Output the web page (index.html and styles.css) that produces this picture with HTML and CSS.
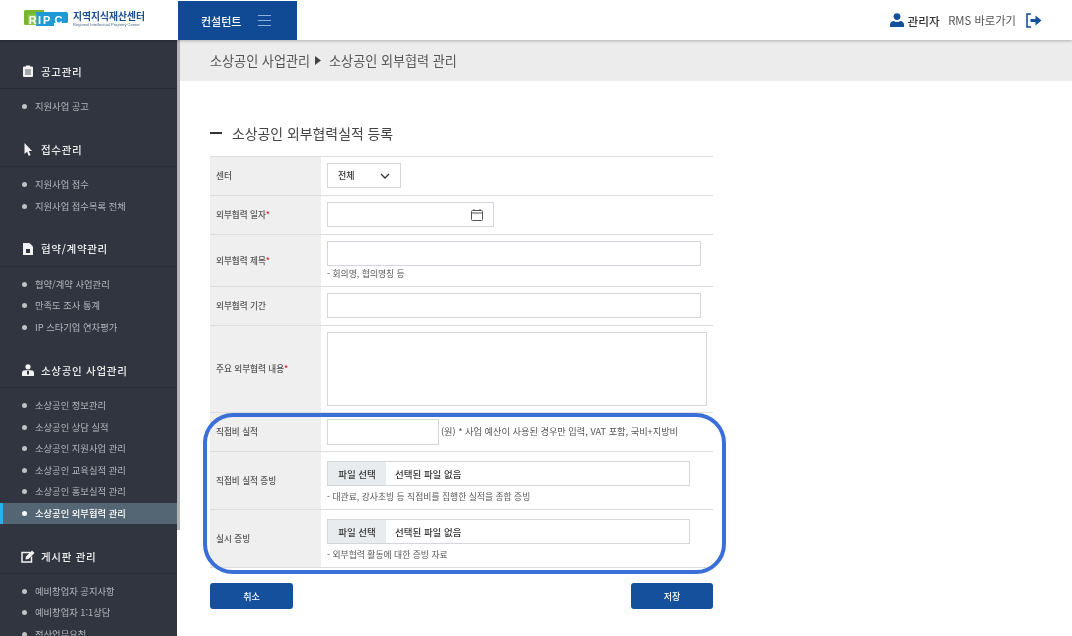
FILE: index.html
```html
<!DOCTYPE html>
<html lang="ko">
<head>
<meta charset="utf-8">
<title>소상공인 외부협력 관리</title>
<link rel="stylesheet" href="styles.css">
</head>
<body>
<header class="topbar">
  <div class="logo">
    <svg class="logo-mark" width="44" height="16" viewBox="0 0 44 16">
      <path d="M1.500 0H20V15H1.500A1.500 1.500 0 0 1 0 13.500V1.500A1.500 1.500 0 0 1 1.500 0z" fill="#78b82e"/>
      <path d="M12 2h30.500A1.500 1.500 0 0 1 44 3.500V11.500A1.500 1.500 0 0 1 42.500 13H30v3H12z" fill="#1f9ad6"/>
      <rect x="4" y="4.500" width="8.500" height="10.500" fill="#8fc64f"/>
      <text class="logo-letters" y="14" x="4.800 14 19 30.500">RIPC</text>
    </svg>
    <div class="logo-text">
      <div class="logo-ko">지역지식재산센터</div>
      <div class="logo-en">Regional Intellectual Property Center</div>
    </div>
  </div>
  <div class="top-menu">
    <span>컨설턴트</span>
    <svg width="13" height="11" viewBox="0 0 13 11"><path d="M0 .5h13M0 5.500h13M0 10.500h13" stroke="#8fb0d8" stroke-width="1"/></svg>
  </div>
  <div class="top-user">
    <svg width="14" height="14" viewBox="0 0 14 14"><circle cx="7" cy="3.600" r="3.400" fill="#15509c"/><path d="M0 14v-2.500c0-2.300 2-3.500 3.800-3.500 1 .7 2 1 3.200 1s2.200-.3 3.200-1c1.800 0 3.800 1.200 3.800 3.500V14z" fill="#15509c"/></svg>
    <span class="admin">관리자</span>
    <span class="rms">RMS 바로가기</span>
    <svg width="16" height="15" viewBox="0 0 16 15"><path d="M5 1H1v13h4" fill="none" stroke="#15509c" stroke-width="1.600"/><path d="M4.500 6h5V2.500L15.500 7.500 9.500 12.500V9h-5z" fill="#15509c"/></svg>
  </div>
</header>

<div class="layout">
  <aside class="sidebar">
    <section class="group">
      <h2 class="group-title">
        <svg class="gi" width="10" height="12" viewBox="0 0 10 12"><path d="M1 1.500h2V.5h4v1h2a1 1 0 0 1 1 1V11a1 1 0 0 1-1 1H1a1 1 0 0 1-1-1V2.500a1 1 0 0 1 1-1z" fill="#f2f2f2"/><path d="M2 5h6M2 7h6M2 9h6" stroke="#31353f" stroke-width=".8"/></svg>
        공고관리
      </h2>
      <ul class="items"><li>지원사업 공고</li></ul>
    </section>
    <section class="group">
      <h2 class="group-title">
        <svg class="gi" width="10" height="13" viewBox="0 0 10 13"><path d="M1.500 0v11l2.500-2.300L5.800 13 7.500 12 5.800 8H9z" fill="#f2f2f2"/></svg>
        접수관리
      </h2>
      <ul class="items"><li>지원사업 접수</li><li>지원사업 접수목록 전체</li></ul>
    </section>
    <section class="group">
      <h2 class="group-title">
        <svg class="gi" width="10" height="12" viewBox="0 0 10 12"><path d="M0 0h6.500L10 3.500V12H0z" fill="#f2f2f2"/><rect x="3" y="6" width="4" height="4" fill="#31353f"/></svg>
        협약/계약관리
      </h2>
      <ul class="items"><li>협약/계약 사업관리</li><li>만족도 조사 통계</li><li>IP 스타기업 연차평가</li></ul>
    </section>
    <section class="group">
      <h2 class="group-title">
        <svg class="gi gi-wide" width="12" height="12" viewBox="0 0 12 12"><circle cx="6" cy="2.800" r="2.600" fill="#f2f2f2"/><path d="M0 12V8.500C0 7 1.500 6.300 3 6.300h6c1.500 0 3 .7 3 2.200V12z" fill="#f2f2f2"/><path d="M5 7h2v3.500H5z" fill="#31353f"/></svg>
        소상공인 사업관리
      </h2>
      <ul class="items">
        <li>소상공인 정보관리</li>
        <li>소상공인 상담 실적</li>
        <li>소상공인 지원사업 관리</li>
        <li>소상공인 교육실적 관리</li>
        <li>소상공인 홍보실적 관리</li>
        <li class="active">소상공인 외부협력 관리</li>
      </ul>
    </section>
    <section class="group">
      <h2 class="group-title">
        <svg class="gi gi-edit" width="14" height="13" viewBox="0 0 14 13"><path d="M9 2.500H1v9.500h9.500V6.500" fill="none" stroke="#f2f2f2" stroke-width="1.500"/><path d="M5 6.500 11 .5 13.500 3 7.500 9 4.500 9.500z" fill="#f2f2f2"/></svg>
        게시판 관리
      </h2>
      <ul class="items"><li>예비창업자 공지사항</li><li>예비창업자 1:1상담</li><li>정산업무요청</li></ul>
    </section>
  </aside>
  <div class="scroll-thumb"></div>

  <main class="content">
    <nav class="crumb">
      <span>소상공인 사업관리</span>
      <svg width="6" height="9" viewBox="0 0 6 9"><path d="M0 0l6 4.500L0 9z" fill="#444"/></svg>
      <span>소상공인 외부협력 관리</span>
    </nav>

    <div class="panel">
      <h1 class="section-title"><i class="dash"></i>소상공인 외부협력실적 등록</h1>

      <div class="form">
        <div class="row r39">
          <div class="label">센터</div>
          <div class="field">
            <div class="select"><span>전체</span>
              <svg width="10" height="6" viewBox="0 0 10 6"><path d="M1 1l4 4 4-4" fill="none" stroke="#333" stroke-width="1.300"/></svg>
            </div>
          </div>
        </div>
        <div class="row r39">
          <div class="label">외부협력 일자<b>*</b></div>
          <div class="field">
            <div class="input date">
              <svg width="12" height="12" viewBox="0 0 12 12"><rect x=".5" y="1.500" width="11" height="10" rx="1" fill="none" stroke="#555"/><path d="M.5 4h11M3 0v2M9 0v2" stroke="#555"/></svg>
            </div>
          </div>
        </div>
        <div class="row r52">
          <div class="label">외부협력 제목<b>*</b></div>
          <div class="field">
            <div class="input wide"></div>
            <p class="hint">- 회의명, 협의명칭 등</p>
          </div>
        </div>
        <div class="row r39">
          <div class="label">외부협력 기간</div>
          <div class="field"><div class="input wide"></div></div>
        </div>
        <div class="row r87">
          <div class="label">주요 외부협력 내용<b>*</b></div>
          <div class="field"><div class="textarea"></div></div>
        </div>
        <div class="row r39">
          <div class="label">직접비 실적</div>
          <div class="field inline">
            <div class="input cost"></div>
            <span class="hint-inline">(원) * 사업 예산이 사용된 경우만 입력, VAT 포함, 국비+지방비</span>
          </div>
        </div>
        <div class="row r58">
          <div class="label">직접비 실적 증빙</div>
          <div class="field">
            <div class="file"><span class="file-btn">파일 선택</span><span class="file-name">선택된 파일 없음</span></div>
            <p class="hint">- 대관료, 강사초빙 등 직접비를 집행한 실적을 종합 증빙</p>
          </div>
        </div>
        <div class="row r58">
          <div class="label">실시 증빙</div>
          <div class="field">
            <div class="file"><span class="file-btn">파일 선택</span><span class="file-name">선택된 파일 없음</span></div>
            <p class="hint">- 외부협력 활동에 대한 증빙 자료</p>
          </div>
        </div>
        <div class="highlight"></div>
      </div>

      <div class="actions">
        <button class="btn" type="button">취소</button>
        <button class="btn btn-save" type="button">저장</button>
      </div>
    </div>
  </main>
</div>
</body>
</html>
```
FILE: styles.css
```css
* { box-sizing: border-box; }
html, body { margin: 0; padding: 0; height: 636px; overflow: hidden; background: #fff; }
body { font-family: "Noto Sans CJK KR", "Noto Sans", sans-serif; color: #444; filter: blur(.5px); }
h1, h2, p, ul { margin: 0; padding: 0; }
ul { list-style: none; }

.topbar { position: relative; z-index: 2; height: 40px; display: flex; background: #fff; box-shadow: 0 1px 3px rgba(0,0,0,.25); }
.logo { width: 178px; padding: 10px 0 0 24px; display: flex; gap: 5px; }
.logo-mark { flex: none; }
.logo-letters { font: 700 11px "Liberation Sans", sans-serif; fill: #fff; }
.logo-ko { font-size: 9.800px; line-height: 12px; font-weight: 700; color: #1d4e8f; white-space: nowrap; }
.logo-en { font: 400 4.100px/6px "Liberation Sans", sans-serif; color: #4a6a90; white-space: nowrap; }
.top-menu { width: 119px; margin-top: 1px; height: 39px; background: #114a94; color: #fff; display: flex; align-items: center; gap: 17px; padding-left: 23px; font-size: 11px; font-weight: 500; }
.top-user { margin-left: auto; padding-right: 30px; display: flex; align-items: center; font-size: 11.300px; }
.admin { margin-left: 3px; font-size: 11.700px; font-weight: 500; color: #333; }
.rms { margin: 0 10px 0 8.500px; color: #555; }

.layout { display: flex; height: 596px; }
.sidebar { width: 177px; flex: none; height: 596px; overflow: hidden; background: #31353f; padding-top: 14.400px; }
.scroll-thumb { width: 3px; flex: none; height: 490px; background: #b4b4b4; }
.group-title { height: 35px; display: flex; align-items: center; padding-left: 23px; gap: 8px; font-size: 10.500px; font-weight: 500; letter-spacing: .7px; color: #eee; border-bottom: 1px solid #2a2d35; }
.gi { flex: none; }
.gi-wide { margin-left: -1px; margin-right: -1px; }
.gi-edit { margin-left: -2px; margin-right: -2px; }
.items { padding: 6.800px 0 14.600px; }
.items li { position: relative; height: 21.600px; line-height: 21.600px; padding-left: 35px; font-size: 9.300px; color: #b4b7bd; white-space: nowrap; }
.items li::before { content: ""; position: absolute; left: 22px; top: 8px; width: 5px; height: 5px; border-radius: 50%; background: #bfc1c5; }
.items li.active { background: #546673; color: #fff; box-shadow: inset 3px 0 0 #29b1ec; font-weight: 500; }
.items li.active::before { background: #fff; }

.content { flex: 1; min-width: 0; }
.crumb { height: 41px; background: #ececec; display: flex; align-items: center; gap: 5px; padding-left: 30px; font-size: 13.100px; color: #555; }
.crumb span + svg + span { margin-left: 3px; }
.panel { width: 503px; margin-left: 30px; padding-top: 42px; }
.section-title { display: flex; align-items: center; height: 20px; font-size: 13.900px; font-weight: 400; color: #444; }
.dash { width: 12px; height: 2px; background: #333; margin-right: 10px; }

.form { position: relative; margin-top: 13px; border-top: 1px solid #ddd; }
.row { display: flex; border-bottom: 1px solid #ddd; }
.r39 { height: 39px; }
.r52 { height: 52px; }
.r58 { height: 58px; }
.r87 { height: 87px; }
.label { width: 111px; flex: none; background: #efefef; padding: 0 0 2px 6px; display: flex; align-items: center; font-size: 8.600px; font-weight: 500; color: #555; white-space: nowrap; }
.label b { color: #d8232a; font-weight: 500; }
.field { flex: 1; padding: 6px 0 0 6px; min-width: 0; }
.inline { display: flex; align-items: flex-start; }
.input, .select, .textarea, .file { border: 1px solid #d3d7dd; background: #fff; }
.select { width: 74px; height: 25px; display: flex; align-items: center; justify-content: space-between; padding: 0 10px; font-size: 9px; font-weight: 500; color: #333; }
.input { height: 25px; }
.date { width: 167px; display: flex; align-items: center; justify-content: flex-end; padding-right: 10px; }
.wide { width: 374px; }
.cost { width: 112px; height: 26px; flex: none; }
.textarea { width: 380px; height: 74px; }
.hint { margin-top: 1px; font-size: 8.800px; line-height: 13px; color: #555; white-space: nowrap; }
.hint-inline { margin: 6px 0 0 2px; font-size: 9.200px; line-height: 13px; color: #555; white-space: nowrap; }
.file { width: 363px; height: 25px; display: flex; font-size: 9.500px; font-weight: 500; color: #333; margin-top: 3px; }
.file-btn { width: 58px; background: #e9ecef; display: flex; align-items: center; justify-content: center; }
.file-name { padding-left: 9px; display: flex; align-items: center; }
.file + .hint { margin-top: 4px; }

.highlight { position: absolute; left: -7px; top: 256px; width: 523px; height: 161px; border: 4px solid #3a6fd8; border-radius: 30px; pointer-events: none; }

.actions { display: flex; justify-content: space-between; margin-top: 15px; }
.btn { width: 83px; height: 26px; border: 0; border-radius: 3px; background: #15509c; color: #fff; font: 500 9px "Noto Sans CJK KR", sans-serif; padding: 0; }
.btn-save { width: 82px; }
```
